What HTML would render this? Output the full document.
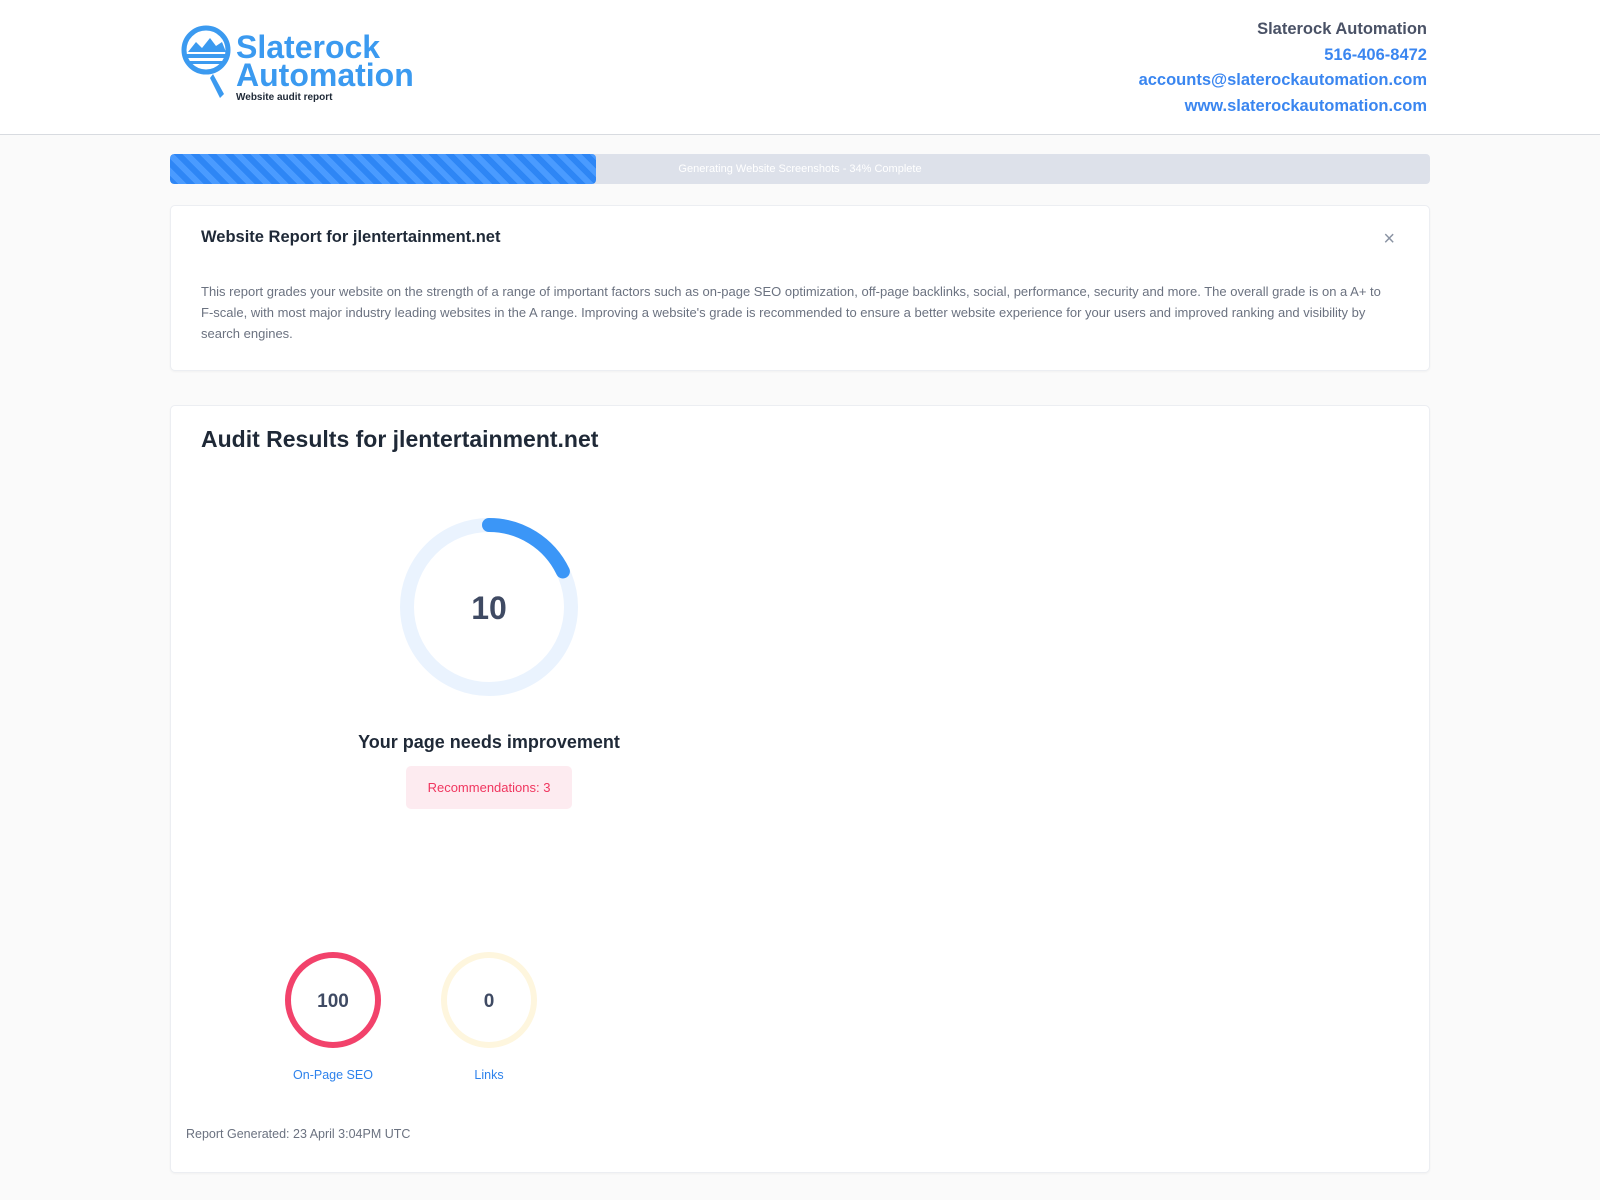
<!DOCTYPE html>
<html><head><meta charset="utf-8"><style>
body{margin:0;width:1600px;height:1200px;background:#fafafa;font-family:"Liberation Sans",sans-serif;position:relative;overflow:hidden}
.hdr{position:absolute;left:0;top:0;width:1600px;height:134px;background:#fff;border-bottom:1px solid #d8dbe0}
.card{position:absolute;left:170px;width:1258px;background:#fff;border:1px solid #eceef2;border-radius:5px;box-shadow:0 1px 2px rgba(0,0,0,.04)}
.a{position:absolute}
</style></head><body>
<div class="hdr">
 <svg class="a" style="left:180px;top:24px" width="56" height="78" viewBox="0 0 56 78">
  <circle cx="26" cy="26" r="22" fill="none" stroke="#3b9af0" stroke-width="5"/>
  <path d="M8 28 L16 18 L22 24 L30 14 L36 22 L42 18 L46 28 Z" fill="#3b9af0"/>
  <rect x="3" y="30" width="46" height="4" fill="#3b9af0"/>
  <rect x="6" y="37" width="40" height="3" fill="#3b9af0"/>
  <path d="M33 50 L44 70 L40 74 L30 54 Z" fill="#3b9af0"/>
 </svg>
 <div class="a" style="left:236px;top:33px;font-weight:bold;font-size:32px;line-height:28px;color:#3b9af0">Slaterock<br>Automation</div>
 <div class="a" style="left:236px;top:92px;font-weight:bold;font-size:10px;color:#1f2937">Website audit report</div>
 <div class="a" style="right:173px;top:17px;text-align:right;font-size:16.5px;line-height:25.6px;font-weight:bold;color:#3a86f0">
  <div style="color:#4a5266">Slaterock Automation</div><div>516-406-8472</div><div>accounts@slaterockautomation.com</div><div>www.slaterockautomation.com</div></div>
</div>
<div class="a" style="left:170px;top:154px;width:1260px;height:30px;background:#dde1ea;border-radius:4px;overflow:hidden">
 <div style="width:426px;height:30px;border-radius:4px;background:repeating-linear-gradient(45deg,#2e86f5 0 6px,#4a9bff 6px 12px)"></div>
 <div class="a" style="left:0;right:0;top:9px;text-align:center;font-size:11px;color:#fff">Generating Website Screenshots - 34% Complete</div>
</div>
<div class="card" style="top:205px;height:164px">
 <div class="a" style="left:30px;top:22px;font-size:16.5px;font-weight:bold;color:#1f2937">Website Report for jlentertainment.net</div>
 <div class="a" style="right:34px;top:22px;font-size:20px;color:#8a93a3">×</div>
 <div class="a" style="left:30px;top:75px;width:1182px;font-size:13px;line-height:21px;color:#6b7280">This report grades your website on the strength of a range of important factors such as on-page SEO optimization, off-page backlinks, social, performance, security and more. The overall grade is on a A+ to F-scale, with most major industry leading websites in the A range. Improving a website's grade is recommended to ensure a better website experience for your users and improved ranking and visibility by search engines.</div>
</div>
<div class="card" style="top:405px;height:766px">
 <div class="a" style="left:30px;top:20px;font-size:23px;font-weight:bold;color:#1f2937">Audit Results for jlentertainment.net</div>
 <svg class="a" style="left:228px;top:111px" width="180" height="180"><circle cx="90" cy="90" r="82" fill="none" stroke="#eaf3fe" stroke-width="14"/>
  <circle cx="90" cy="90" r="82" fill="none" stroke="#3b96f7" stroke-width="14" stroke-linecap="round" stroke-dasharray="92 600" transform="rotate(-90 90 90)"/>
  <text x="90" y="102" text-anchor="middle" font-family="Liberation Sans" font-weight="bold" font-size="32" fill="#3f4a63">10</text></svg>
 <div class="a" style="left:118px;width:400px;top:326px;text-align:center;font-size:18px;font-weight:bold;color:#1f2937">Your page needs improvement</div>
 <div class="a" style="left:235px;top:360px;width:166px;height:43px;background:#fdebf0;border-radius:5px;text-align:center;line-height:43px;font-size:13px;color:#f0365f">Recommendations: 3</div>
 <svg class="a" style="left:112px;top:544px" width="100" height="100"><circle cx="50" cy="50" r="45" fill="none" stroke="#f2426b" stroke-width="6"/><text x="50" y="57" text-anchor="middle" font-family="Liberation Sans" font-weight="bold" font-size="19" fill="#3f4a63">100</text></svg>
 <svg class="a" style="left:268px;top:544px" width="100" height="100"><circle cx="50" cy="50" r="45" fill="none" stroke="#fef6de" stroke-width="6"/><text x="50" y="57" text-anchor="middle" font-family="Liberation Sans" font-weight="bold" font-size="19" fill="#3f4a63">0</text></svg>
 <div class="a" style="left:112px;width:100px;top:662px;text-align:center;font-size:12.5px;color:#2d82ec">On-Page SEO</div>
 <div class="a" style="left:268px;width:100px;top:662px;text-align:center;font-size:12.5px;color:#2d82ec">Links</div>
 <div class="a" style="left:15px;top:721px;font-size:12.5px;color:#6b7280">Report Generated: 23 April 3:04PM UTC</div>
</div>
</body></html>
